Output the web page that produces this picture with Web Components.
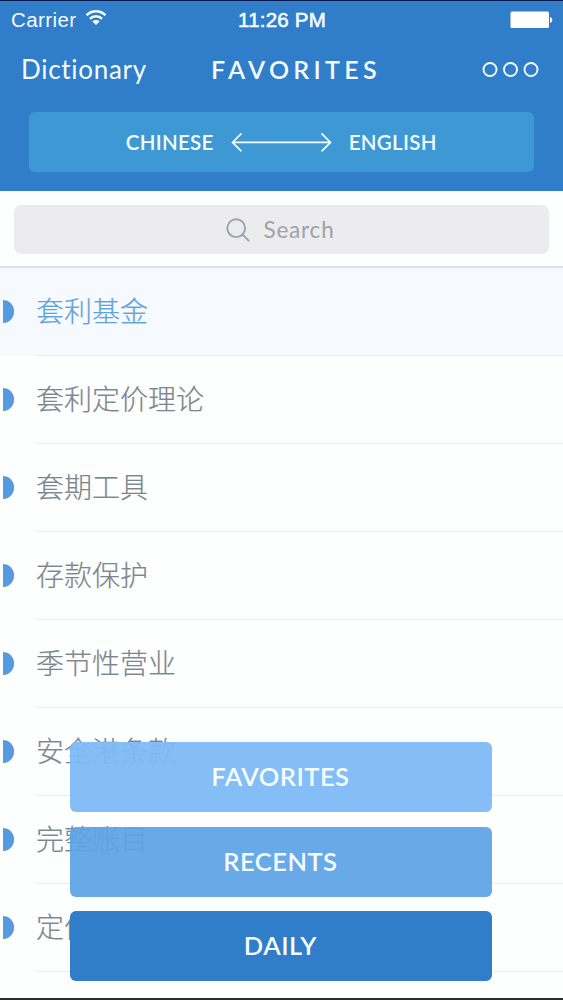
<!DOCTYPE html>
<html lang="en">
<head>
<meta charset="utf-8">
<title>Dictionary</title>
<style>
  html, body {
    margin: 0;
    height: 1000px;
    overflow: hidden;
  }
  body {
    font-family: Lato, "Noto Sans CJK SC", sans-serif;
    background: #fdfefe;
  }
</style>
</head>
<body>
<dict-app>
  <status-bar slot="top" carrier="Carrier" time="11:26 PM"></status-bar>
  <nav-bar slot="top" back="Dictionary">FAVORITES</nav-bar>
  <language-switch slot="top" from="CHINESE" to="ENGLISH"></language-switch>
  <search-field placeholder="Search"></search-field>
  <word-row active>套利基金</word-row>
  <word-row>套利定价理论</word-row>
  <word-row>套期工具</word-row>
  <word-row>存款保护</word-row>
  <word-row>季节性营业</word-row>
  <word-row>安全港条款</word-row>
  <word-row>完整账目</word-row>
  <word-row>定价</word-row>
  <menu-button slot="menu" style="--fill: rgba(126,186,247,0.95)">FAVORITES</menu-button>
  <menu-button slot="menu" style="--fill: rgba(95,164,230,0.94)">RECENTS</menu-button>
  <menu-button slot="menu" style="--fill: #307dc9">DAILY</menu-button>
</dict-app>

<script>
class DictApp extends HTMLElement {
  constructor() {
    super();
    this.attachShadow({ mode: "open" });
    this.shadowRoot.innerHTML = `
    <style>
      :host {
        display: block;
        position: relative;
        box-sizing: border-box;
        height: 1000px;
        border-top: 1px solid #06164a;
        border-bottom: 2px solid #2b2c30;
        overflow: hidden;
      }
      header {
        height: 190px;
        background: #307dc9;
        color: #f4fcff;
      }
      .menu {
        position: absolute;
        left: 70.4px;
        bottom: 17px;
        width: 422px;
        display: grid;
        gap: 14.3px;
      }
    </style>
    <header><slot name="top"></slot></header>
    <main><slot></slot></main>
    <div class="menu"><slot name="menu"></slot></div>
    `;
  }
}

class StatusBar extends HTMLElement {
  constructor() {
    super();
    this.attachShadow({ mode: "open" });
    this.shadowRoot.innerHTML = `
    <style>
      :host {
        display: grid;
        grid-template-columns: 1fr auto 1fr;
        align-items: center;
        height: 37px;
        padding: 0 10px 0 11px;
        font: 20.5px "Liberation Sans", sans-serif;
      }
      .left {
        display: flex;
        align-items: center;
        gap: 9px;
      }
      .carrier {
        letter-spacing: 0.4px;
      }
      .time {
        -webkit-text-stroke: 0.6px currentColor;
        letter-spacing: 0.2px;
      }
      .battery {
        justify-self: end;
      }
      svg {
        display: block;
      }
      .wifi {
        margin-top: -4px;
      }
    </style>
    <div class="left">
      <span class="carrier"></span>
      <svg class="wifi" width="22" height="17" viewBox="0 0 23 18" fill="none" stroke="currentColor" stroke-width="2.700">
        <path d="M1.500 6.600a14.200 14.200 0 0 1 20 0M5.100 10.300a9.200 9.200 0 0 1 12.800 0"/>
        <path d="M11.500 17l-3.900-3.800a5.600 5.600 0 0 1 7.800 0z" fill="currentColor" stroke="none"/>
      </svg>
    </div>
    <span class="time"></span>
    <svg class="battery" width="43" height="18" viewBox="0 0 43 18">
      <rect x="0.500" y="0.500" width="38.500" height="16.500" rx="1.500" fill="#fff"/>
      <path d="M40 6c3 .7 3 5.300 0 6z" fill="#fff"/>
    </svg>
    `;
  }

  connectedCallback() {
    this.shadowRoot.querySelector(".carrier").textContent = this.getAttribute("carrier");
    this.shadowRoot.querySelector(".time").textContent = this.getAttribute("time");
  }
}

class NavBar extends HTMLElement {
  constructor() {
    super();
    this.attachShadow({ mode: "open" });
    this.shadowRoot.innerHTML = `
    <style>
      :host {
        display: grid;
        grid-template-columns: 190px auto 1fr;
        align-items: center;
        height: 62px;
        padding: 0 24px 0 21px;
      }
      .back {
        font-size: 26px;
        letter-spacing: 0.7px;
      }
      .title {
        font-size: 25px;
        font-weight: 600;
        letter-spacing: 4.3px;
      }
      svg {
        display: block;
        justify-self: end;
      }
    </style>
    <span class="back"></span>
    <span class="title"><slot></slot></span>
    <svg width="57" height="16" viewBox="0 0 57 16" fill="none" stroke="currentColor" stroke-width="1.900">
      <circle cx="8" cy="8.500" r="6.500"/>
      <circle cx="28.500" cy="8.500" r="6.500"/>
      <circle cx="49" cy="8.500" r="6.500"/>
    </svg>
    `;
  }

  connectedCallback() {
    this.shadowRoot.querySelector(".back").textContent = this.getAttribute("back");
  }
}

class LanguageSwitch extends HTMLElement {
  constructor() {
    super();
    this.attachShadow({ mode: "open" });
    this.shadowRoot.innerHTML = `
    <style>
      :host {
        display: flex;
        align-items: center;
        justify-content: center;
        gap: 17px;
        height: 60px;
        margin: 12px 29px 0 28.5px;
        border-radius: 6px;
        background: #3d98d4;
        font-size: 20.5px;
        font-weight: 600;
        letter-spacing: 0.3px;
      }
      svg {
        display: block;
      }
    </style>
    <span class="from"></span>
    <svg width="101" height="20" viewBox="0 0 101 20" fill="none" stroke="currentColor" stroke-width="1.700">
      <path d="M1.500 10.400h98M10.500 1.400l-9 9 9 9M90.500 1.400l9 9-9 9"/>
    </svg>
    <span class="to"></span>
    `;
  }

  connectedCallback() {
    this.shadowRoot.querySelector(".from").textContent = this.getAttribute("from");
    this.shadowRoot.querySelector(".to").textContent = this.getAttribute("to");
  }
}

class SearchField extends HTMLElement {
  constructor() {
    super();
    this.attachShadow({ mode: "open" });
    this.shadowRoot.innerHTML = `
    <style>
      :host {
        display: block;
        box-sizing: border-box;
        height: 77px;
        padding: 14px 14px 0;
        border-bottom: 2px solid #dfe3e8;
      }
      .box {
        display: flex;
        align-items: center;
        justify-content: center;
        gap: 13px;
        height: 49px;
        padding-right: 2px;
        border-radius: 7px;
        background: #ececef;
        color: #9da3a9;
        font-size: 22.5px;
        letter-spacing: 0.8px;
      }
      svg {
        display: block;
      }
    </style>
    <div class="box">
      <svg width="24" height="24" viewBox="0 0 24 24" fill="none" stroke="currentColor" stroke-width="1.900">
        <circle cx="10.200" cy="10.200" r="8.900"/>
        <path d="M16.500 16.500l6.700 6.700"/>
      </svg>
      <span></span>
    </div>
    `;
  }

  connectedCallback() {
    this.shadowRoot.querySelector("span").textContent = this.getAttribute("placeholder");
  }
}

class WordRow extends HTMLElement {
  constructor() {
    super();
    this.attachShadow({ mode: "open" });
    this.shadowRoot.innerHTML = `
    <style>
      :host {
        display: flex;
        align-items: stretch;
        height: 88px;
        color: #7e858c;
        font: 300 28px "Noto Sans CJK SC", sans-serif;
        -webkit-text-stroke: 0.2px currentColor;
      }
      :host([active]) {
        background: #f6f9fe;
        color: #5fa3dc;
      }
      .mark {
        align-self: center;
        width: 11px;
        height: 23px;
        margin: 0 22px 1px 3px;
        border-radius: 0 12px 12px 0;
        background: #559be1;
      }
      .word {
        flex: 1;
        display: flex;
        align-items: center;
        padding-bottom: 4px;
        border-bottom: 1px solid #e8ebef;
      }
    </style>
    <div class="mark"></div>
    <div class="word"><slot></slot></div>
    `;
  }
}

class MenuButton extends HTMLElement {
  constructor() {
    super();
    this.attachShadow({ mode: "open" });
    this.shadowRoot.innerHTML = `
    <style>
      :host {
        display: flex;
        box-sizing: border-box;
        align-items: center;
        justify-content: center;
        height: 70px;
        padding: 0 2px 2px 0;
        border-radius: 6px;
        background: var(--fill, #307dc9);
        color: #f6fcff;
        font-size: 25.5px;
        font-weight: 600;
        letter-spacing: 0.5px;
      }
    </style>
    <slot></slot>
    `;
  }
}

customElements.define("dict-app", DictApp);
customElements.define("status-bar", StatusBar);
customElements.define("nav-bar", NavBar);
customElements.define("language-switch", LanguageSwitch);
customElements.define("search-field", SearchField);
customElements.define("word-row", WordRow);
customElements.define("menu-button", MenuButton);
</script>
</body>
</html>
